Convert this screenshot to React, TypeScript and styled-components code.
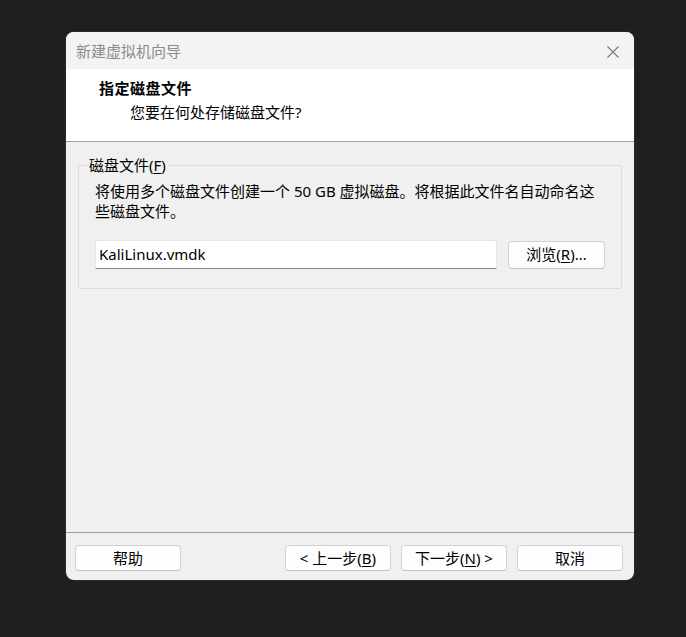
import React from "react";
import styled, { createGlobalStyle } from "styled-components";

const Global = createGlobalStyle`
  html, body {
    margin: 0;
    padding: 0;
    background: #1f1f1f;
  }
  body {
    font-family: "Noto Sans", "Noto Sans CJK SC", sans-serif;
    font-size: 15px;
    color: #000;
  }
`;

const Page = styled.div`
  width: 686px;
  height: 637px;
  padding: 32px 0 0 66px;
  box-sizing: border-box;
`;

const Window = styled.div`
  width: 568px;
  height: 548px;
  border-radius: 8px;
  overflow: hidden;
  background: #f0f0f0;
  display: flex;
  flex-direction: column;
  box-shadow: 0 0 0 1px #2b2b2b;
`;

const TitleBar = styled.div`
  height: 37px;
  flex: 0 0 37px;
  background: #f3f3f3;
  display: flex;
  align-items: center;
  justify-content: space-between;
  padding: 0 15px 0 10px;
  box-sizing: border-box;
`;

const Title = styled.span`
  color: #8c8c8c;
  font-size: 15px;
  line-height: 1;
  padding-top: 1px;
`;

const CloseButton = styled.span`
  width: 12px;
  height: 12px;
  display: flex;
  margin-top: 2px;
`;

const Header = styled.div`
  height: 73px;
  flex: 0 0 73px;
  background: #ffffff;
  border-bottom: 1px solid #a0a0a0;
  display: flex;
  flex-direction: column;
  padding: 8px 0 0 33px;
  box-sizing: border-box;
`;

const HeaderTitle = styled.div`
  font-weight: bold;
  font-size: 15px;
  line-height: 22px;
  letter-spacing: 0.5px;
`;

const HeaderSub = styled.div`
  font-size: 15px;
  line-height: 22px;
  padding-left: 31px;
  margin-top: 2px;
`;

const Content = styled.div`
  flex: 1;
  padding: 13px 12px 0 12px;
`;

const Group = styled.fieldset`
  margin: 0;
  border: 1px solid #dcdcdc;
  border-radius: 2px;
  padding: 6px 16px 18px 16px;
  min-inline-size: 0;
  height: 134px;
  box-sizing: border-box;
`;

const Legend = styled.legend`
  padding: 0 2px;
  margin-left: -8px;
  font-size: 15px;
  line-height: 20px;
`;

const Description = styled.div`
  font-size: 15px;
  line-height: 20px;
`;

const Underline = styled.span`
  text-decoration: underline;
  text-underline-offset: 2px;
`;

const InputRow = styled.div`
  display: flex;
  align-items: center;
  gap: 11px;
  margin-top: 19px;
`;

const TextInput = styled.div`
  width: 402px;
  height: 29px;
  box-sizing: border-box;
  background: #ffffff;
  border: 1px solid #e6e6e6;
  border-bottom: 1px solid #868686;
  border-radius: 3px 3px 0 0;
  display: flex;
  align-items: center;
  padding: 0 0 2px 3px;
  font-size: 15px;
`;

const Button = styled.div<{ $w?: number; $h?: number }>`
  width: ${(p) => p.$w ?? 106}px;
  height: ${(p) => p.$h ?? 26}px;
  box-sizing: border-box;
  background: #fdfdfd;
  border: 1px solid #d2d2d2;
  border-bottom-color: #c4c4c4;
  border-radius: 4px;
  display: flex;
  align-items: center;
  justify-content: center;
  font-size: 15px;
  line-height: 1;
  white-space: pre;
`;

const Footer = styled.div`
  flex: 0 0 48px;
  border-top: 1px solid #a0a0a0;
  display: flex;
  align-items: flex-start;
  padding: 12px 11px 0 9px;
  box-sizing: border-box;
`;

const Spacer = styled.div`
  flex: 1;
`;

const ButtonGroup = styled.div`
  display: flex;
  gap: 10px;
`;

export default function App() {
  return (
    <>
      <Global />
      <Page>
        <Window>
          <TitleBar>
            <Title>新建虚拟机向导</Title>
            <CloseButton>
              <svg width="12" height="12" viewBox="0 0 12 12">
                <path d="M0.5 0.5 L11.5 11.5 M11.5 0.5 L0.5 11.5" stroke="#7a7a7a" strokeWidth="1.1" fill="none" />
              </svg>
            </CloseButton>
          </TitleBar>
          <Header>
            <HeaderTitle>指定磁盘文件</HeaderTitle>
            <HeaderSub>您要在何处存储磁盘文件?</HeaderSub>
          </Header>
          <Content>
            <Group>
              <Legend>
                磁盘文件(<Underline>F</Underline>)
              </Legend>
              <Description>
                将使用多个磁盘文件创建一个 50 GB 虚拟磁盘。将根据此文件名自动命名这些磁盘文件。
              </Description>
              <InputRow>
                <TextInput>KaliLinux.vmdk</TextInput>
                <Button $w={97} $h={28}>
                  浏览(<Underline>R</Underline>)...
                </Button>
              </InputRow>
            </Group>
          </Content>
          <Footer>
            <Button>帮助</Button>
            <Spacer />
            <ButtonGroup>
              <Button>
                {"< 上一步("}<Underline>B</Underline>{")"}
              </Button>
              <Button>
                {"下一步("}<Underline>N</Underline>{") >"}
              </Button>
              <Button>取消</Button>
            </ButtonGroup>
          </Footer>
        </Window>
      </Page>
    </>
  );
}
